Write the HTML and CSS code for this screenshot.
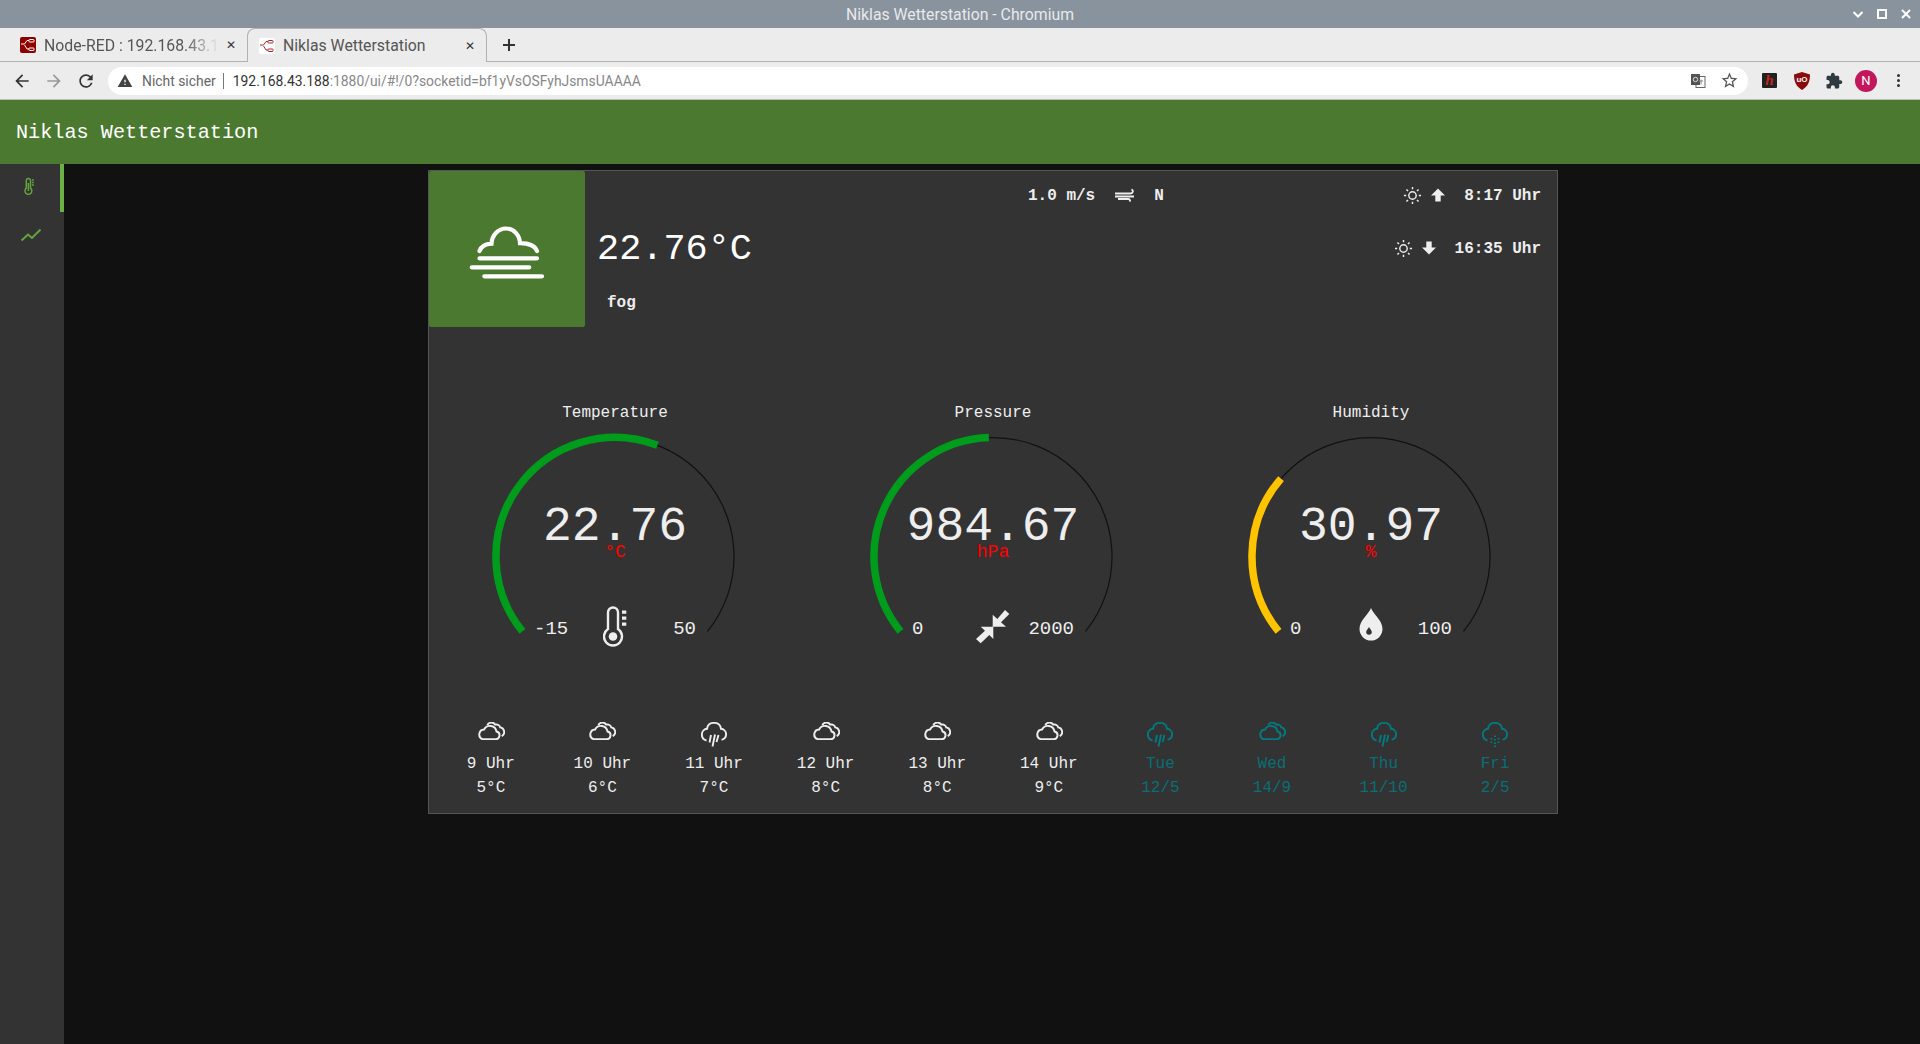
FILE: index.html
```html
<!DOCTYPE html>
<html>

<head>
    <meta charset="UTF-8" />
    <title>Niklas Wetterstation - Chromium</title>
    <link rel="stylesheet" href="styles.css">
</head>

<body>
    <svg class="defs" width="0" height="0">
        <symbol id="i-clouds" viewBox="0 0 28 18">
            <path d="M5.6 17.2h13.2a3.9 3.9 0 0 0 .7-7.7 6.6 6.6 0 0 0-12.4-2A5 5 0 0 0 5.6 17.2z" />
            <path d="M10.3 3.2a4.6 4.6 0 0 1 8-.5c2.2-.7 4.4.5 4.9 2.7a4.7 4.7 0 0 1 1.500 8.800" />
        </symbol>
        <symbol id="i-rain" viewBox="0 0 26 25">
            <path d="M5.5 18.500C2 17.500.7 14.500.9 12 1.100 9 3.500 7 6 6.800 6.500 3 9.500.9 13 .9s6.500 2.100 7 5.900c2.500.2 5 2.200 5.100 5.200.1 2.500-1.500 5-4.500 5.800" />
            <path d="M10 13 8.500 20.500M14 12.500 11.500 24.500M17.500 13 15.500 20" />
        </symbol>
        <symbol id="i-snow" viewBox="0 0 26 25">
            <path d="M5.5 18.500C2 17.500.7 14.500.9 12 1.100 9 3.500 7 6 6.800 6.500 3 9.500.9 13 .9s6.500 2.100 7 5.900c2.500.2 5 2.200 5.100 5.200.1 2.500-1.500 5-4.500 5.800" />
            <path d="M13 13.500v1.500M9.500 16v1.500M13 17v1.500M16.500 16v1.500M9.500 19.500V21M13 20.500V22M16.500 19.500V21M13 23.500V25" />
        </symbol>
        <symbol id="i-sun" viewBox="0 0 20 20">
            <circle cx="10" cy="10" r="3.9" />
            <path d="M10 1v2.400M10 16.600V19M1 10h2.400M16.600 10H19M3.600 3.600l1.700 1.700M14.700 14.700l1.700 1.700M3.600 16.400l1.700-1.700M14.700 5.300l1.700-1.700" />
        </symbol>
        <symbol id="i-nodered" viewBox="0 0 16 16">
            <path d="M1 7h3.500l2.500-3.500h2M4.500 8 7 12h2" />
            <rect x="9" y="2.500" width="5" height="2.500" rx=".6" />
            <rect x="9" y="11" width="5" height="2.500" rx=".6" />
        </symbol>
    </svg>

    <div class="titlebar">
        <span>Niklas Wetterstation - Chromium</span>
        <div class="window-btns">
            <svg width="12" height="12" viewBox="0 0 12 12"><path d="M1.500 4 6 8.500 10.500 4" /></svg>
            <svg width="12" height="12" viewBox="0 0 12 12"><path d="M2 2h8v8H2z" /></svg>
            <svg width="12" height="12" viewBox="0 0 12 12"><path d="M2 2l8 8M10 2l-8 8" /></svg>
        </div>
    </div>

    <div class="tabstrip">
        <div class="tab">
            <svg class="favicon favicon-red" width="16" height="16"><use href="#i-nodered" /></svg>
            <span class="tab-title tab-fade">Node-RED : 192.168.43.1</span>
            <span class="tab-close">&#10005;</span>
        </div>
        <div class="tab tab-active">
            <svg class="favicon favicon-white" width="16" height="16"><use href="#i-nodered" /></svg>
            <span class="tab-title">Niklas Wetterstation</span>
            <span class="tab-close">&#10005;</span>
        </div>
        <svg class="new-tab" width="14" height="14" viewBox="0 0 14 14"><path d="M7 1v12M1 7h12" /></svg>
    </div>

    <div class="toolbar">
        <svg class="nav-icon" width="20" height="20" viewBox="0 0 24 24"><path d="M20 11H7.830l5.590-5.590L12 4l-8 8 8 8 1.410-1.410L7.830 13H20v-2z" /></svg>
        <svg class="nav-icon nav-off" width="20" height="20" viewBox="0 0 24 24"><path d="M12 4l-1.410 1.410L16.170 11H4v2h12.170l-5.580 5.590L12 20l8-8z" /></svg>
        <svg class="nav-icon" width="20" height="20" viewBox="0 0 24 24"><path d="M17.650 6.350A7.958 7.958 0 0 0 12 4c-4.420 0-7.990 3.580-7.990 8s3.570 8 7.990 8c3.730 0 6.840-2.550 7.730-6h-2.080A5.990 5.990 0 0 1 12 18c-3.310 0-6-2.690-6-6s2.690-6 6-6c1.660 0 3.140.690 4.220 1.780L13 11h7V4l-2.350 2.350z" /></svg>
        <div class="omnibox">
            <svg class="warn" width="16" height="16" viewBox="0 0 24 24"><path d="M1 21h22L12 2 1 21zm12-3h-2v-2h2v2zm0-4h-2v-4h2v4z" /></svg>
            <span class="not-secure">Nicht sicher</span>
            <span class="url"><b>192.168.43.188</b>:1880/ui/#!/0?socketid=bf1yVsOSFyhJsmsUAAAA</span>
            <svg class="translate" width="16" height="16" viewBox="0 0 16 16">
                <rect x="6" y="3.500" width="9" height="11" fill="#fff" stroke="#666" />
                <rect x="1" y="1" width="9" height="11" fill="#555" />
                <circle cx="5.500" cy="6.500" r="2.200" fill="none" stroke="#ddd" />
                <path d="M9 8h4M11 6.500v5" fill="none" stroke="#888" />
            </svg>
            <svg class="star" width="19" height="19" viewBox="0 0 24 24"><path d="M22 9.240l-7.190-.620L12 2 9.190 8.630 2 9.240l5.460 4.730L5.820 21 12 17.270 18.180 21l-1.630-7.030L22 9.240zM12 15.400l-3.760 2.270 1-4.280-3.320-2.880 4.380-.380L12 6.100l1.710 4.040 4.380.380-3.320 2.880 1 4.280L12 15.400z" /></svg>
        </div>
        <div class="extensions">
            <span class="ext-h">h</span>
            <span class="ext-ub">
                <svg width="16" height="18" viewBox="0 0 16 18"><path d="M8 0 16 2.500c0 7-2 12-8 15.500C2 14.500 0 9.500 0 2.500z" /></svg>
                <span class="ext-ub-text">uO</span>
            </span>
            <svg class="ext-puzzle" width="18" height="18" viewBox="0 0 24 24"><path d="M20.500 11H19V7c0-1.100-.9-2-2-2h-4V3.500C13 2.120 11.880 1 10.500 1S8 2.120 8 3.500V5H4c-1.100 0-1.990.9-1.990 2v3.800H3.500c1.490 0 2.700 1.210 2.700 2.700s-1.210 2.700-2.700 2.700H2V20c0 1.100.9 2 2 2h3.800v-1.500c0-1.490 1.210-2.700 2.700-2.700 1.490 0 2.700 1.210 2.700 2.700V22H17c1.100 0 2-.9 2-2v-4h1.500c1.380 0 2.500-1.120 2.500-2.500S21.880 11 20.500 11z" /></svg>
            <span class="avatar">N</span>
            <span class="kebab"><i></i><i></i><i></i></span>
        </div>
    </div>

    <div class="app-header">Niklas Wetterstation</div>

    <div class="app-body">
        <div class="sidebar">
            <div class="side-item side-active">
                <svg width="20" height="20" viewBox="0 0 20 20"><path d="M8 2.500a2 2 0 0 1 2.500 1.900v7.800a3.400 3.400 0 1 1-4.200 0V4.400A2 2 0 0 1 8 2.500zM8.400 7v8" /><path d="M12 4h1.800M12 6.500h1.800M12 9h1.800" /></svg>
            </div>
            <div class="side-item">
                <svg width="22" height="14" viewBox="0 0 22 14"><path d="M1.500 12.500 8 6.500l4 3.500 8.500-8.500" /></svg>
            </div>
        </div>

        <div class="content">
            <div class="card">
                <div class="current">
                    <div class="current-icon">
                        <svg width="156" height="156" viewBox="0 0 156 156">
                            <path d="M50.500 80c1.500-4 6-7 12-7.300C63 63.500 69.500 57.500 77 57.500s13.500 6 14 14.700c8.500 0 15 3 17 7.800" />
                            <path d="M50.500 87.300H108M42.700 96.300h57.600M55.300 105.300H113" />
                        </svg>
                    </div>
                    <div class="current-main">
                        <div class="current-temp">22.76°C</div>
                        <div class="current-text">fog</div>
                    </div>
                    <div class="wind">
                        <span>1.0 m/s</span>
                        <svg width="22" height="14" viewBox="0 0 22 14"><path d="M1 5.500h15.500c2.800 0 3.200-3.500.9-3.800M1 8.500h19M4 11h10c1.800 0 2.600 1.500 1.400 2.500" /></svg>
                        <span>N</span>
                    </div>
                    <div class="sun">
                        <div class="sun-row">
                            <svg class="sun-icon" width="19" height="19"><use href="#i-sun" /></svg>
                            <svg class="sun-arrow" width="16" height="16" viewBox="0 0 16 16"><path d="M8 1.500 15 8.500h-4.300v6H5.300v-6H1z" /></svg>
                            <span>8:17 Uhr</span>
                        </div>
                        <div class="sun-row">
                            <svg class="sun-icon" width="19" height="19"><use href="#i-sun" /></svg>
                            <svg class="sun-arrow" width="16" height="16" viewBox="0 0 16 16"><path d="M8 14.500 15 7.500h-4.300v-6H5.300v6H1z" /></svg>
                            <span>16:35 Uhr</span>
                        </div>
                    </div>
                </div>

                <div class="gauges">
                    <div class="gauge">
                        <div class="gauge-title">Temperature</div>
                        <div class="dial">
                            <svg class="dial-arc" width="300" height="220" viewBox="0 0 300 220">
                                <path class="track" d="M57.500 206.400A119 119 0 1 1 242.500 206.400" />
                                <path class="fill-green" d="M57.500 206.400A119 119 0 0 1 192.450 20.300" />
                            </svg>
                            <div class="readout">
                                <div class="value">22.76</div>
                                <div class="unit">°C</div>
                                <div class="limits">
                                    <span>-15</span>
                                    <svg class="gauge-icon" width="24" height="41" viewBox="0 0 24 41">
                                        <path class="outline" d="M10 1.500a5 5 0 0 1 5 5v16.500a9 9 0 1 1-10 0V6.500a5 5 0 0 1 5-5z" />
                                        <circle class="solid" cx="10" cy="30.500" r="4.300" />
                                        <path class="solid" d="M19 4.500h4.300v3.300H19zM19 10.500h4.300v3.300H19zM19 16.500h4.300v3.300H19z" />
                                    </svg>
                                    <span>50</span>
                                </div>
                            </div>
                        </div>
                    </div>
                    <div class="gauge">
                        <div class="gauge-title">Pressure</div>
                        <div class="dial">
                            <svg class="dial-arc" width="300" height="220" viewBox="0 0 300 220">
                                <path class="track" d="M57.500 206.400A119 119 0 1 1 242.500 206.400" />
                                <path class="fill-green" d="M57.500 206.400A119 119 0 0 1 145.850 12.570" />
                            </svg>
                            <div class="readout">
                                <div class="value">984.67</div>
                                <div class="unit">hPa</div>
                                <div class="limits">
                                    <span>0</span>
                                    <svg class="gauge-icon" width="34" height="34" viewBox="0 0 34 34">
                                        <path class="solid" d="M16.700 4.700 21.300 9 29 0l4.300 4-8.300 8.300 5 4.400H16.700zM4.700 16.700 9 20.700 0 29l4.700 4.300 8.600-8.300 4 4V16.700z" />
                                    </svg>
                                    <span>2000</span>
                                </div>
                            </div>
                        </div>
                    </div>
                    <div class="gauge">
                        <div class="gauge-title">Humidity</div>
                        <div class="dial">
                            <svg class="dial-arc" width="300" height="220" viewBox="0 0 300 220">
                                <path class="track" d="M57.500 206.400A119 119 0 1 1 242.500 206.400" />
                                <path class="fill-yellow" d="M57.500 206.400A119 119 0 0 1 60.050 53.600" />
                            </svg>
                            <div class="readout">
                                <div class="value">30.97</div>
                                <div class="unit">%</div>
                                <div class="limits">
                                    <span>0</span>
                                    <svg class="gauge-icon drop" width="24" height="34" viewBox="0 0 24 34">
                                        <path class="solid" fill-rule="evenodd" d="M12 1C14 7 23.500 13 23.500 22a11.500 11.500 0 0 1-23 0C.5 13 10 7 12 1zM10 20c-.8 1.800-2.800 3-2.800 5a2.800 2.800 0 0 0 5.600 0c0-2-2-3.200-2.800-5z" />
                                    </svg>
                                    <span>100</span>
                                </div>
                            </div>
                        </div>
                    </div>
                </div>

                <div class="forecast">
                    <div class="fc"><div class="fc-icon"><svg width="28" height="18"><use href="#i-clouds" /></svg></div><div>9 Uhr</div><div>5°C</div></div>
                    <div class="fc"><div class="fc-icon"><svg width="28" height="18"><use href="#i-clouds" /></svg></div><div>10 Uhr</div><div>6°C</div></div>
                    <div class="fc"><div class="fc-icon"><svg width="26" height="25"><use href="#i-rain" /></svg></div><div>11 Uhr</div><div>7°C</div></div>
                    <div class="fc"><div class="fc-icon"><svg width="28" height="18"><use href="#i-clouds" /></svg></div><div>12 Uhr</div><div>8°C</div></div>
                    <div class="fc"><div class="fc-icon"><svg width="28" height="18"><use href="#i-clouds" /></svg></div><div>13 Uhr</div><div>8°C</div></div>
                    <div class="fc"><div class="fc-icon"><svg width="28" height="18"><use href="#i-clouds" /></svg></div><div>14 Uhr</div><div>9°C</div></div>
                    <div class="fc fc-day"><div class="fc-icon"><svg width="26" height="25"><use href="#i-rain" /></svg></div><div>Tue</div><div>12/5</div></div>
                    <div class="fc fc-day"><div class="fc-icon"><svg width="28" height="18"><use href="#i-clouds" /></svg></div><div>Wed</div><div>14/9</div></div>
                    <div class="fc fc-day"><div class="fc-icon"><svg width="26" height="25"><use href="#i-rain" /></svg></div><div>Thu</div><div>11/10</div></div>
                    <div class="fc fc-day"><div class="fc-icon"><svg width="26" height="25"><use href="#i-snow" /></svg></div><div>Fri</div><div>2/5</div></div>
                </div>
            </div>
        </div>
    </div>
</body>

</html>
```
FILE: styles.css
```css
html, body {
    margin: 0;
    height: 100%;
    overflow: hidden;
}

body {
    display: flex;
    flex-direction: column;
    background-color: #111;
    font-family: "Roboto", "Liberation Sans", sans-serif;
}

.defs {
    position: absolute;
}

/* browser window */
.titlebar {
    display: flex;
    align-items: center;
    justify-content: center;
    position: relative;
    height: 28px;
    background-color: #89939d;
    color: #e6e9ec;
    font-size: 15.8px;
}

.window-btns {
    position: absolute;
    right: 8px;
    top: 8px;
    display: flex;
    gap: 12px;
}

.window-btns svg {
    fill: none;
    stroke: #fff;
    stroke-width: 2;
}

.tabstrip {
    display: flex;
    align-items: center;
    height: 33px;
    padding-left: 20px;
    background-color: #ececec;
    border-bottom: 1px solid #b1b1b1;
}

.tab {
    display: flex;
    align-items: center;
    width: 227px;
    height: 34px;
    margin-bottom: -1px;
    color: #555;
    font-size: 15.8px;
}

.tab-active {
    box-sizing: border-box;
    width: 240px;
    padding-left: 11px;
    border: 1px solid #b1b1b1;
    border-bottom: none;
    border-radius: 8px 8px 0 0;
    background-color: #ececec;
}

.tab-title {
    width: 175px;
    margin-left: 8px;
    overflow: hidden;
    white-space: nowrap;
}

.tab-fade {
    -webkit-mask-image: linear-gradient(to right, #000 80%, transparent);
    mask-image: linear-gradient(to right, #000 80%, transparent);
}

.tab-close {
    width: 14px;
    margin-left: 5px;
    font-size: 12px;
    font-weight: bold;
    text-align: center;
    color: #333;
    font-family: "DejaVu Sans", sans-serif;
}

.favicon {
    flex: none;
    border-radius: 2px;
    fill: #fff;
    stroke: #fff;
    stroke-width: 1;
}

.favicon use {
    fill: none;
}

.favicon-red {
    background-color: #8f0000;
    color: #fff;
}

.favicon-white {
    background-color: #fff;
    stroke: #b3262b;
}

.new-tab {
    margin-left: 15px;
    stroke: #333;
    stroke-width: 2;
}

.toolbar {
    display: flex;
    align-items: center;
    box-sizing: border-box;
    height: 38px;
    padding-left: 12px;
    background-color: #ececec;
    border-bottom: 1px solid #bcbcbc;
}

.nav-icon {
    margin-right: 12px;
    fill: #333;
}

.nav-off {
    fill: #999;
}

.omnibox {
    display: flex;
    align-items: center;
    box-sizing: border-box;
    width: 1640px;
    height: 28px;
    padding: 0 9px;
    border-radius: 14px;
    background-color: #fff;
    font-size: 13.9px;
    color: #888;
    white-space: nowrap;
}

.warn {
    fill: #444;
}

.not-secure {
    margin-left: 9px;
    padding-right: 7px;
    border-right: 1px solid #777;
    color: #666;
    line-height: 16px;
}

.url {
    margin-left: 9px;
    flex: 1;
}

.url b {
    font-weight: normal;
    color: #333;
}

.translate {
    margin-right: 14px;
}

.star {
    fill: #555;
}

.extensions {
    display: flex;
    align-items: center;
    margin-left: 14px;
}

.ext-h {
    display: block;
    width: 15px;
    height: 15px;
    background-color: #222;
    border-radius: 1px;
    color: #c9241e;
    font: italic bold 15px/15px "Liberation Serif", serif;
    text-align: center;
}

.ext-ub {
    position: relative;
    display: block;
    width: 16px;
    height: 18px;
    margin-left: 17px;
    fill: #8b0a0a;
}

.ext-ub-text {
    position: absolute;
    left: 0;
    top: 3px;
    width: 16px;
    color: #fff;
    font: bold 8px/10px "Liberation Sans", sans-serif;
    text-align: center;
}

.ext-puzzle {
    margin-left: 15px;
    fill: #2f3a40;
}

.avatar {
    display: block;
    width: 22px;
    height: 22px;
    margin-left: 12px;
    border-radius: 50%;
    background-color: #c2185b;
    color: #fff;
    font-size: 13px;
    line-height: 22px;
    text-align: center;
}

.kebab {
    display: flex;
    flex-direction: column;
    gap: 2px;
    margin-left: 20px;
}

.kebab i {
    display: block;
    width: 3px;
    height: 3px;
    border-radius: 50%;
    background-color: #333;
}

/* dashboard */
.app-header {
    box-sizing: border-box;
    height: 64px;
    padding: 1px 0 0 16px;
    background-color: #4b7930;
    color: #fff;
    font: 20.2px/64px "Liberation Mono", monospace;
}

.app-body {
    display: flex;
    flex: 1;
    min-height: 0;
}

.sidebar {
    width: 64px;
    flex: none;
    background-color: #333;
}

.side-item {
    display: flex;
    align-items: center;
    justify-content: center;
    box-sizing: border-box;
    height: 48px;
    padding-right: 2px;
}

.side-item svg {
    margin-bottom: 2px;
    fill: none;
    stroke: #63a53c;
    stroke-width: 2;
}

.side-active {
    border-right: 4px solid #6db046;
    padding-right: 0;
}

.side-active svg {
    margin-bottom: 4px;
    stroke-width: 1.5;
}

.content {
    flex: 1;
    padding: 6px 0 0 364px;
}

.card {
    box-sizing: border-box;
    width: 1130px;
    height: 644px;
    border: 1px solid #555;
    background-color: #333;
    color: #eee;
    font-family: "Liberation Mono", monospace;
    font-size: 16px;
    line-height: 24px;
}

.current {
    display: flex;
    height: 156px;
}

.current-icon {
    width: 156px;
    height: 156px;
    flex: none;
    border-radius: 2px;
    background-color: #4b7930;
}

.current-icon svg {
    display: block;
    fill: none;
    stroke: #fff;
    stroke-width: 4.2;
    stroke-linecap: round;
}

.current-main {
    width: 431px;
    flex: none;
    padding: 56px 0 0 12px;
}

.current-temp {
    color: #fff;
    font-size: 36.9px;
    line-height: 44px;
}

.current-text {
    margin-top: 20px;
    padding-left: 10px;
    font-weight: bold;
}

.wind {
    display: flex;
    align-items: center;
    height: 24px;
    margin-top: 13px;
    font-weight: bold;
}

.wind svg {
    margin: 0 18px 2px 19px;
    fill: none;
    stroke: #eee;
    stroke-width: 1.8;
}

.sun {
    margin-left: auto;
    padding: 13px 16px 0 0;
    display: flex;
    flex-direction: column;
    align-items: flex-end;
    gap: 29px;
    font-weight: bold;
}

.sun-row {
    display: flex;
    align-items: center;
    height: 24px;
}

.sun-icon {
    margin-bottom: 2px;
    fill: none;
    stroke: #eee;
    stroke-width: 1.5;
}

.sun-arrow {
    margin: 0 18px 2px 8px;
    fill: #eee;
}

.gauges {
    display: grid;
    grid-template-columns: repeat(3, 360px);
    column-gap: 18px;
    justify-content: center;
    margin-top: 74px;
}

.gauge-title {
    text-align: center;
}

.dial {
    position: relative;
    height: 240px;
}

.dial-arc {
    display: block;
    margin: 0 auto;
    fill: none;
}

.track {
    stroke: #111;
    stroke-width: 1.2;
}

.fill-green {
    stroke: #009c1c;
    stroke-width: 7.5;
}

.fill-yellow {
    stroke: #ffc400;
    stroke-width: 7.5;
}

.readout {
    position: absolute;
    left: 0;
    right: 0;
    top: 0;
    display: flex;
    flex-direction: column;
    align-items: center;
    padding-top: 74px;
}

.value {
    font-size: 48px;
    line-height: 56px;
    margin-bottom: -13px;
}

.unit {
    color: #f00;
    font-size: 18px;
    line-height: 20px;
}

.limits {
    display: grid;
    grid-template-columns: 1fr auto 1fr;
    grid-template-rows: 24px;
    align-items: center;
    width: 162px;
    margin-top: 55px;
    font-size: 19px;
}

.limits span:last-child {
    text-align: right;
}

.gauge-icon {
    display: block;
    margin-bottom: 5px;
}

.drop {
    margin-bottom: 10px;
}

.outline {
    fill: none;
    stroke: #eee;
    stroke-width: 2.4;
}

.solid {
    fill: #eee;
}

.forecast {
    display: grid;
    grid-template-columns: repeat(10, 111.6px);
    justify-content: center;
    margin-top: 49px;
}

.fc {
    text-align: center;
}

.fc-icon {
    box-sizing: border-box;
    height: 38px;
    padding-top: 8px;
}

.fc-icon svg {
    display: block;
    margin: 0 auto;
    fill: none;
    stroke: #eee;
    stroke-width: 1.9;
    overflow: visible;
}

.fc-day {
    color: #0a6e76;
}

.fc-day svg {
    stroke: #047a80;
}
```
